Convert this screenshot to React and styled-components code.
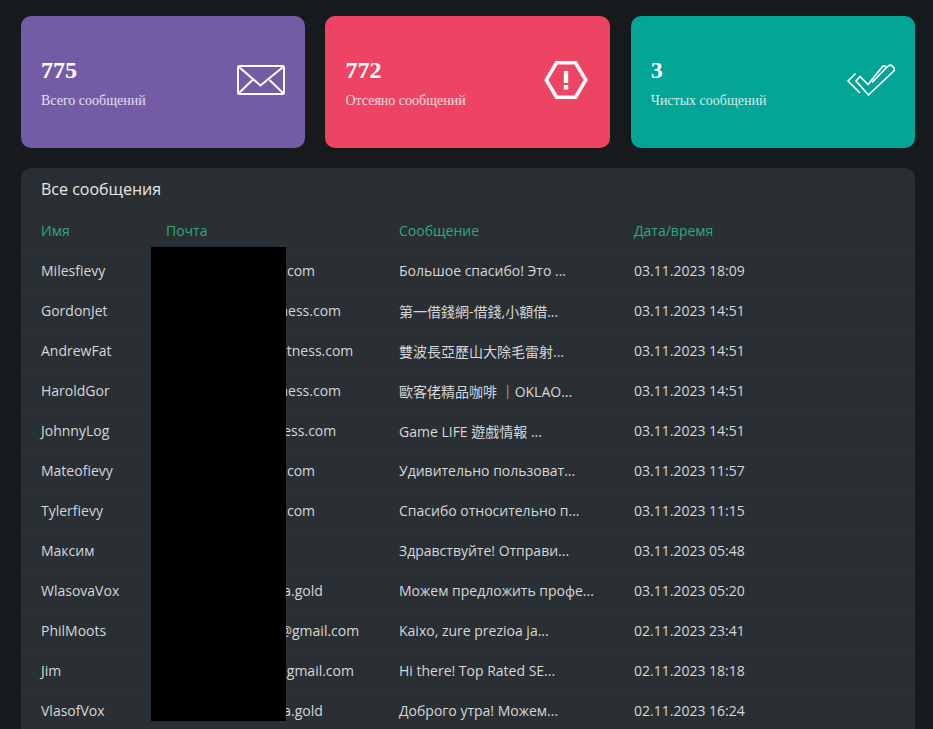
import styled, { createGlobalStyle } from "styled-components"

const GlobalStyle = createGlobalStyle`
  html, body {
    margin: 0;
    height: 729px;
    overflow: hidden;
    background: #161a1d;
  }
`

const Page = styled.div`
  position: relative;
  box-sizing: border-box;
  padding: 16px 18px 0 21px;
  font-family: "Open Sans", "Noto Sans CJK TC", sans-serif;
`

const Cards = styled.div`
  display: grid;
  grid-template-columns: 284px 285px 284px;
  gap: 20.4px;
`

const Card = styled.div`
  display: flex;
  align-items: center;
  justify-content: space-between;
  box-sizing: border-box;
  height: 132px;
  padding: 0 20px;
  border-radius: 10px;
  background: ${(p) => p.$bg};
  color: #fff;
  font-family: "Liberation Serif", serif;

  svg {
    margin-bottom: 4px;
  }
`

const CardText = styled.div`
  padding-top: 2px;
`

const Count = styled.div`
  font-size: 24px;
  font-weight: 700;
  line-height: 28px;
`

const Caption = styled.div`
  margin-top: 8px;
  font-size: 14px;
  line-height: 18px;
  opacity: 0.8;
`

const Panel = styled.div`
  margin-top: 20px;
  border-radius: 10px 10px 0 0;
  background: #2a2f33;
  padding-top: 10px;
`

const PanelTitle = styled.h2`
  margin: 0;
  padding: 0 20px;
  font-size: 16px;
  font-weight: 400;
  line-height: 22px;
  color: #e6e8ea;
`

const Table = styled.table`
  width: 100%;
  margin-top: 10px;
  border-collapse: collapse;
  table-layout: fixed;
  font-size: 14px;
`

const HeadCell = styled.th`
  height: 40px;
  padding: 0 0 0 20px;
  text-align: left;
  font-weight: 400;
  color: #2fa87e;
  width: ${(p) => p.$w || "auto"};
`

const Row = styled.tr`
  border-top: 1px solid #2e3337;
`

const Cell = styled.td`
  height: 39px;
  padding: 0 0 0 20px;
  color: #d5d7d9;
  white-space: nowrap;
`

const Redaction = styled.div`
  position: absolute;
  left: 151px;
  top: 247px;
  width: 135px;
  height: 474px;
  background: #000;
`

const EnvelopeIcon = () => (
  <svg width="48" height="30" viewBox="0 0 48 30" fill="none" stroke="#fff" strokeWidth="2" strokeLinejoin="round">
    <rect x="1" y="1" width="46" height="28" rx="1.5" />
    <path d="M2 2 L23.5 20.5 L46 2" />
    <path d="M2 28 L15.5 15 M46 28 L32.5 15" />
  </svg>
)

const AlertIcon = () => (
  <svg width="46" height="38" viewBox="0 0 46 38" fill="none">
    <path d="M12.5 1.75 H31.5 L41.8 19 L31.5 36.25 H12.5 L2.2 19 Z" stroke="#fff" strokeWidth="3.5" />
    <path d="M19.8 10 H24.2 V22 H19.8 Z M19.8 24 H24.2 V28.5 H19.8 Z" fill="#fff" />
  </svg>
)

const DoubleCheckIcon = () => (
  <svg width="48" height="32" viewBox="0 0 48 32" fill="none" stroke="#fff" strokeWidth="1.7" strokeLinejoin="round" strokeLinecap="round">
    <path d="M8 10 L1 17 L12.5 28.5" />
    <path d="M39 4 L41.5 1.8 Q43.5 0.6 45 1.8 L47 3.8 Q48 5.5 46.8 7 L21.5 31 L9 17 L13 12.5 L21 20.5 L35.5 2.5 Q37 1.2 38.5 2.5 L39.5 3.5 L25.5 18" />
  </svg>
)

const stats = [
  { count: "775", caption: "Всего сообщений", bg: "#735ca5", Icon: EnvelopeIcon },
  { count: "772", caption: "Отсеяно сообщений", bg: "#ee4464", Icon: AlertIcon },
  { count: "3", caption: "Чистых сообщений", bg: "#04a597", Icon: DoubleCheckIcon },
]

// адреса под чёрной плашкой не видны, важна только длина строки
const messages = [
  ["Milesfievy", "xxxxxxxxxxxxxxxx.com", "Большое спасибо! Это ...", "03.11.2023 18:09"],
  ["GordonJet", "xxxxxxxxxxxxxxxiness.com", "第一借錢網-借錢,小額借...", "03.11.2023 14:51"],
  ["AndrewFat", "xxxxxxxxxxxxxxxxitness.com", "雙波長亞歷山大除毛雷射...", "03.11.2023 14:51"],
  ["HaroldGor", "xxxxxxxxxxxxxxxiness.com", "歐客佬精品咖啡 ｜OKLAO...", "03.11.2023 14:51"],
  ["JohnnyLog", "xxxxxxxxxxxxxxxxess.com", "Game LIFE 遊戲情報 ...", "03.11.2023 14:51"],
  ["Mateofievy", "xxxxxxxxxxxxxxxx.com", "Удивительно пользоват...", "03.11.2023 11:57"],
  ["Tylerfievy", "xxxxxxxxxxxxxxxx.com", "Спасибо относительно п...", "03.11.2023 11:15"],
  ["Максим", "xxxxxxxxxxxx", "Здравствуйте! Отправи...", "03.11.2023 05:48"],
  ["WlasovaVox", "xxxxxxxxxxxxxxxxa.gold", "Можем предложить профе...", "03.11.2023 05:20"],
  ["PhilMoots", "xxxxxxxxxxxxxxxi@gmail.com", "Kaixo, zure prezioa ja...", "02.11.2023 23:41"],
  ["Jim", "xxxxxxxxxxxxxxxxigmail.com", "Hi there! Top Rated SE...", "02.11.2023 18:18"],
  ["VlasofVox", "xxxxxxxxxxxxxxxxa.gold", "Доброго утра! Можем...", "02.11.2023 16:24"],
]

export default function App() {
  return (
    <Page>
      <GlobalStyle />
      <Cards>
        {stats.map(({ count, caption, bg, Icon }) => (
          <Card key={caption} $bg={bg}>
            <CardText>
              <Count>{count}</Count>
              <Caption>{caption}</Caption>
            </CardText>
            <Icon />
          </Card>
        ))}
      </Cards>
      <Panel>
        <PanelTitle>Все сообщения</PanelTitle>
        <Table>
          <thead>
            <tr>
              <HeadCell $w="105px">Имя</HeadCell>
              <HeadCell $w="213px">Почта</HeadCell>
              <HeadCell $w="215px">Сообщение</HeadCell>
              <HeadCell>Дата/время</HeadCell>
            </tr>
          </thead>
          <tbody>
            {messages.map((m) => (
              <Row key={m[0]}>
                {m.map((value, i) => (
                  <Cell key={i}>{value}</Cell>
                ))}
              </Row>
            ))}
          </tbody>
        </Table>
      </Panel>
      <Redaction />
    </Page>
  )
}
